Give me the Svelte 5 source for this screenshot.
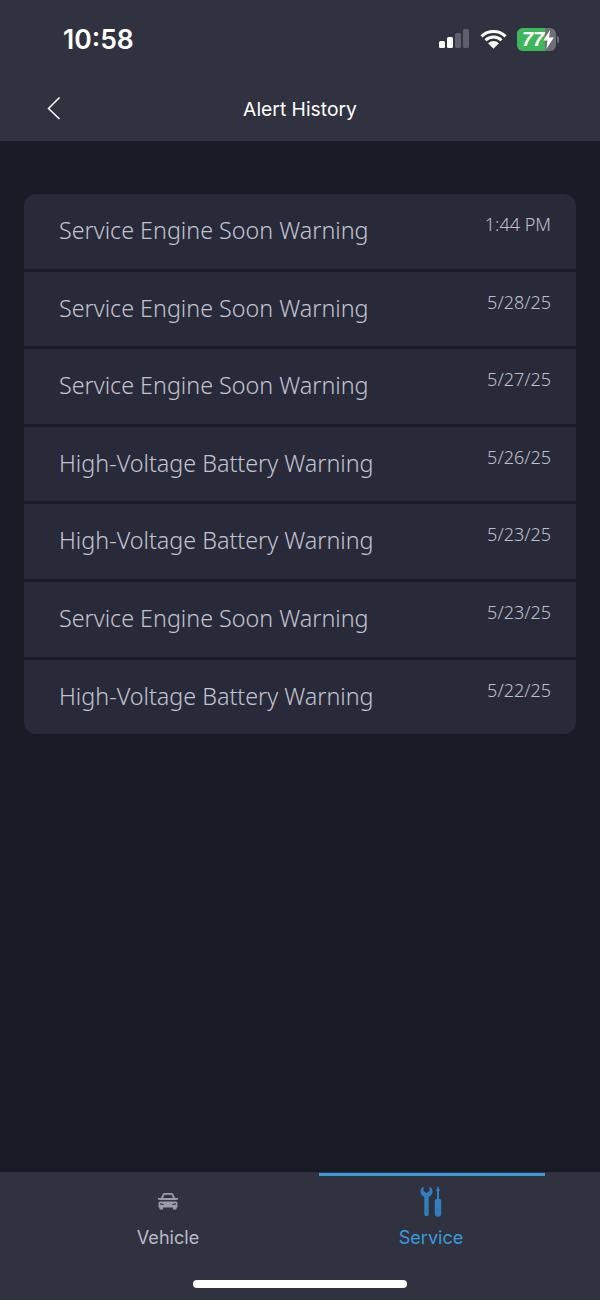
<script>
  const alerts = [
    ['Service Engine Soon Warning', '1:44 PM'],
    ['Service Engine Soon Warning', '5/28/25'],
    ['Service Engine Soon Warning', '5/27/25'],
    ['High-Voltage Battery Warning', '5/26/25'],
    ['High-Voltage Battery Warning', '5/23/25'],
    ['Service Engine Soon Warning', '5/23/25'],
    ['High-Voltage Battery Warning', '5/22/25']
  ];
</script>

<div class="screen">
  <header>
    <div class="status">
      <span class="time">10:58</span>
      <div class="indicators">
        <svg class="signal" width="30" height="20" viewBox="0 0 30 20">
          <rect x="0" y="12" width="6" height="7" rx="1.500" fill="#fff"/>
          <rect x="8" y="8" width="6" height="11" rx="1.500" fill="#fff"/>
          <rect x="16" y="4" width="6" height="15" rx="1.500" fill="#5f606b"/>
          <rect x="24" y="0" width="6" height="19" rx="1.500" fill="#5f606b"/>
        </svg>
        <svg class="wifi" width="27" height="20" viewBox="0 0 28 20">
          <path d="M1.500 7.200A18 18 0 0 1 26.500 7.200M5.700 11.300A12 12 0 0 1 22.300 11.300" fill="none" stroke="#fff" stroke-width="3.200"/>
          <path d="M14 20l-5.600-5.700a8 8 0 0 1 11.200 0z" fill="#fff"/>
        </svg>
        <div class="battery">
          <div class="fill"></div>
          <span class="level">77</span>
          <svg class="bolt" width="11" height="19" viewBox="0 0 10 18"><path d="M6.500 0 0 10h4l-1 8 7-11H5.500z" fill="#fff"/></svg>
        </div>
        <span class="cap"></span>
      </div>
    </div>
    <div class="nav">
      <svg class="back" width="16" height="24" viewBox="0 0 16 24"><path d="M13.500 1.500 2.500 12.500l11 10.500" fill="none" stroke="#fff" stroke-width="1.500"/></svg>
      <h1>Alert History</h1>
    </div>
  </header>

  <main>
    <ul>
      {#each alerts as [title, date]}
        <li>
          <span class="title">{title}</span>
          <span class="date">{date}</span>
        </li>
      {/each}
    </ul>
  </main>

  <footer>
    <div class="tabs">
      <div class="tab">
        <svg class="car" width="22" height="18" viewBox="0 0 22 18">
          <path fill="#9b9ca8" fill-rule="evenodd" d="M4 6 5.500 2.500C6 1.300 7 1 8 1h6c1 0 2 .3 2.500 1.500L18 6h3v1.500l-2.400.5H3.400L1 7.500V6zM6 6h10l-1-2.600c-.2-.5-.5-.7-1-.7H8c-.5 0-.8.2-1 .7z"/>
          <path fill="#9b9ca8" d="M2.500 9.500h17l1 1.500v4.500h-1V17.500h-3.500v-2H6v2H2.500v-2h-1V11z"/>
          <path fill="#31323f" d="M3 11.200l3.800.8v1L3 12.500zM19 11.200l-3.800.8v1l3.800-.5z"/>
        </svg>
        <span>Vehicle</span>
      </div>
      <div class="tab active">
        <svg class="tools" width="22" height="31" viewBox="0 0 22 31">
          <path fill="#2f7fc1" d="M3.500.5V5L6.500 7 9.500 5V.5C11.500 1.500 12.500 3.500 12.500 5.500 12.500 8 11 10 8.700 11V28a2.200 2.200 0 0 1-4.400 0V11C2 10 .5 8 .5 5.500.5 3.500 1.500 1.500 3.500.5z"/>
          <path fill="#2f7fc1" d="M18 0 20 5H19V13H19.500C20.600 13 21.200 13.800 21.200 15V27.500a3.200 3.200 0 0 1-6.400 0V15C14.800 13.800 15.400 13 16.500 13H17V5H16z"/>
        </svg>
        <span>Service</span>
      </div>
    </div>
    <div class="home"></div>
  </footer>
</div>

<style>
  :global(body) { margin: 0; }
  .screen {
    width: 600px;
    height: 1300px;
    background: #191b27;
    display: flex;
    flex-direction: column;
    font-family: Inter, "Liberation Sans", sans-serif;
    overflow: hidden;
  }
  header { height: 141px; background: #31323f; flex: none; }
  .status {
    height: 78px;
    display: flex;
    justify-content: space-between;
    align-items: center;
    padding: 0 41px 0 63px;
    box-sizing: border-box;
  }
  .time { color: #fff; font-size: 26.500px; font-weight: 600; line-height: 1; }
  .indicators { display: flex; align-items: center; }
  .signal { margin-right: 11px; }
  .wifi { margin-right: 10px; }
  .battery {
    width: 39px; height: 23px; border-radius: 6px; background: #6d6e78;
    position: relative; overflow: hidden; color: #fff;
  }
  .fill { position: absolute; left: 0; top: 0; bottom: 0; width: 28px; background: #3eb65a; }
  .level {
    position: absolute; left: 5px; top: 0; font-size: 20px; line-height: 23px;
    font-weight: 700; font-style: italic; color: #fff;
    font-family: "Liberation Sans", sans-serif;
  }
  .bolt { position: absolute; left: 26px; top: 2px; }
  .cap { width: 2px; height: 7px; background: #6d6e78; border-radius: 0 2px 2px 0; margin-left: 1px; }
  .nav {
    height: 63px;
    position: relative;
    display: flex;
    justify-content: center;
    align-items: center;
    padding-bottom: 2px;
    box-sizing: border-box;
  }
  .back { position: absolute; left: 46px; top: 18px; }
  h1 { margin: 0; color: #fff; font-size: 19.300px; font-weight: 400; }
  main { flex: 1; padding: 53px 24px 0; }
  ul {
    list-style: none; margin: 0; padding: 0;
    display: flex; flex-direction: column; gap: 3px;
    border-radius: 12px; overflow: hidden;
  }
  li {
    height: 74.600px;
    background: #282a3a;
    display: flex; justify-content: space-between;
    padding: 0 25px 0 35px;
    box-sizing: border-box;
    font-family: "Noto Sans", sans-serif;
    font-weight: 350;
  }
  .title { color: #c3c4d0; font-size: 23.300px; line-height: 72.500px; }
  .date { color: #bfc0cc; font-size: 18px; line-height: 20px; margin-top: 20px; font-weight: 300; }
  footer { height: 128px; background: #31323f; flex: none; position: relative; }
  .tabs { display: grid; grid-template-columns: 262px 264px; padding-left: 37px; }
  .tab {
    display: flex; flex-direction: column; align-items: center;
    height: 80px; color: #b9bac6; font-size: 18.100px; line-height: 22px;
    box-sizing: border-box; padding-top: 20px; position: relative;
  }
  .car { margin-bottom: 16px; }
  .tab.active { color: #3a9bdc; padding-top: 14px; }
  .tab.active::before {
    content: ""; position: absolute; top: 1px; left: 20px; width: 226px; height: 3px; background: #3a9bdc;
  }
  .tools { margin-bottom: 9px; }
  .home { position: absolute; left: 193px; bottom: 12px; width: 214px; height: 8px; border-radius: 4px; background: #fff; }
</style>
